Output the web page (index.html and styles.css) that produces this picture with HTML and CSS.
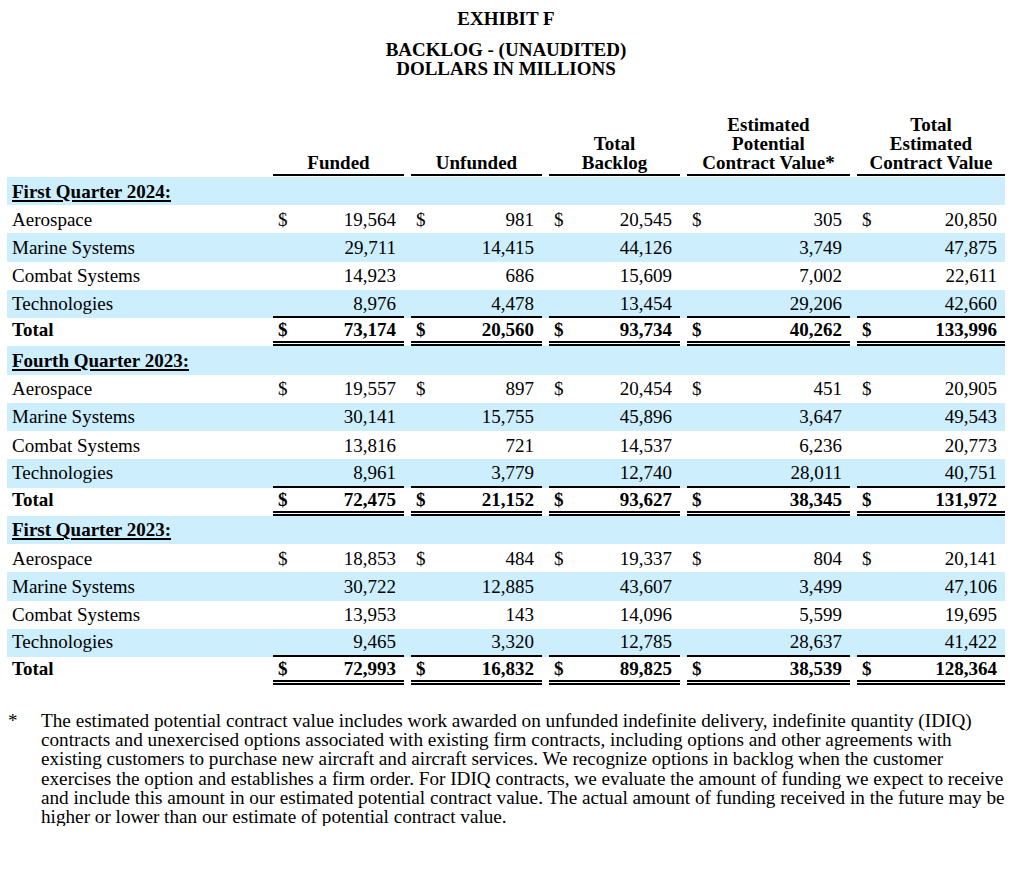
FILE: index.html
```html
<!DOCTYPE html>
<html lang="en">
<head>
<meta charset="utf-8">
<title>Exhibit F - Backlog</title>
<link rel="stylesheet" href="styles.css">
</head>
<body>
<div class="page">
  <div class="title">
    <div class="t1">EXHIBIT F</div>
    <div class="t2">BACKLOG - (UNAUDITED)<br>DOLLARS IN MILLIONS</div>
  </div>

  <div class="table">
    <div class="row head">
      <div class="lab"></div>
      <div class="hc">Funded</div>
      <div class="hc">Unfunded</div>
      <div class="hc">Total<br>Backlog</div>
      <div class="hc">Estimated<br>Potential<br>Contract Value*</div>
      <div class="hc">Total<br>Estimated<br>Contract Value</div>
    </div>

    <div class="row shade sec"><div class="lab"><u>First Quarter 2024:</u></div></div>
    <div class="row"><div class="lab">Aerospace</div><div class="c"><span>$</span><span class="n">19,564</span></div><div class="c"><span>$</span><span class="n">981</span></div><div class="c"><span>$</span><span class="n">20,545</span></div><div class="c"><span>$</span><span class="n">305</span></div><div class="c"><span>$</span><span class="n">20,850</span></div></div>
    <div class="row shade"><div class="lab">Marine Systems</div><div class="c"><span class="n">29,711</span></div><div class="c"><span class="n">14,415</span></div><div class="c"><span class="n">44,126</span></div><div class="c"><span class="n">3,749</span></div><div class="c"><span class="n">47,875</span></div></div>
    <div class="row"><div class="lab">Combat Systems</div><div class="c"><span class="n">14,923</span></div><div class="c"><span class="n">686</span></div><div class="c"><span class="n">15,609</span></div><div class="c"><span class="n">7,002</span></div><div class="c"><span class="n">22,611</span></div></div>
    <div class="row shade sub"><div class="lab">Technologies</div><div class="c"><span class="n">8,976</span></div><div class="c"><span class="n">4,478</span></div><div class="c"><span class="n">13,454</span></div><div class="c"><span class="n">29,206</span></div><div class="c"><span class="n">42,660</span></div></div>
    <div class="row total"><div class="lab">Total</div><div class="c"><span>$</span><span class="n">73,174</span></div><div class="c"><span>$</span><span class="n">20,560</span></div><div class="c"><span>$</span><span class="n">93,734</span></div><div class="c"><span>$</span><span class="n">40,262</span></div><div class="c"><span>$</span><span class="n">133,996</span></div></div>

    <div class="row shade sec"><div class="lab"><u>Fourth Quarter 2023:</u></div></div>
    <div class="row"><div class="lab">Aerospace</div><div class="c"><span>$</span><span class="n">19,557</span></div><div class="c"><span>$</span><span class="n">897</span></div><div class="c"><span>$</span><span class="n">20,454</span></div><div class="c"><span>$</span><span class="n">451</span></div><div class="c"><span>$</span><span class="n">20,905</span></div></div>
    <div class="row shade"><div class="lab">Marine Systems</div><div class="c"><span class="n">30,141</span></div><div class="c"><span class="n">15,755</span></div><div class="c"><span class="n">45,896</span></div><div class="c"><span class="n">3,647</span></div><div class="c"><span class="n">49,543</span></div></div>
    <div class="row"><div class="lab">Combat Systems</div><div class="c"><span class="n">13,816</span></div><div class="c"><span class="n">721</span></div><div class="c"><span class="n">14,537</span></div><div class="c"><span class="n">6,236</span></div><div class="c"><span class="n">20,773</span></div></div>
    <div class="row shade sub"><div class="lab">Technologies</div><div class="c"><span class="n">8,961</span></div><div class="c"><span class="n">3,779</span></div><div class="c"><span class="n">12,740</span></div><div class="c"><span class="n">28,011</span></div><div class="c"><span class="n">40,751</span></div></div>
    <div class="row total"><div class="lab">Total</div><div class="c"><span>$</span><span class="n">72,475</span></div><div class="c"><span>$</span><span class="n">21,152</span></div><div class="c"><span>$</span><span class="n">93,627</span></div><div class="c"><span>$</span><span class="n">38,345</span></div><div class="c"><span>$</span><span class="n">131,972</span></div></div>

    <div class="row shade sec"><div class="lab"><u>First Quarter 2023:</u></div></div>
    <div class="row"><div class="lab">Aerospace</div><div class="c"><span>$</span><span class="n">18,853</span></div><div class="c"><span>$</span><span class="n">484</span></div><div class="c"><span>$</span><span class="n">19,337</span></div><div class="c"><span>$</span><span class="n">804</span></div><div class="c"><span>$</span><span class="n">20,141</span></div></div>
    <div class="row shade"><div class="lab">Marine Systems</div><div class="c"><span class="n">30,722</span></div><div class="c"><span class="n">12,885</span></div><div class="c"><span class="n">43,607</span></div><div class="c"><span class="n">3,499</span></div><div class="c"><span class="n">47,106</span></div></div>
    <div class="row"><div class="lab">Combat Systems</div><div class="c"><span class="n">13,953</span></div><div class="c"><span class="n">143</span></div><div class="c"><span class="n">14,096</span></div><div class="c"><span class="n">5,599</span></div><div class="c"><span class="n">19,695</span></div></div>
    <div class="row shade sub"><div class="lab">Technologies</div><div class="c"><span class="n">9,465</span></div><div class="c"><span class="n">3,320</span></div><div class="c"><span class="n">12,785</span></div><div class="c"><span class="n">28,637</span></div><div class="c"><span class="n">41,422</span></div></div>
    <div class="row total"><div class="lab">Total</div><div class="c"><span>$</span><span class="n">72,993</span></div><div class="c"><span>$</span><span class="n">16,832</span></div><div class="c"><span>$</span><span class="n">89,825</span></div><div class="c"><span>$</span><span class="n">38,539</span></div><div class="c"><span>$</span><span class="n">128,364</span></div></div>
  </div>

  <div class="note">
    <div class="star">*</div>
    <p class="ntext">The estimated potential contract value includes work awarded on unfunded indefinite delivery, indefinite quantity (IDIQ)<br>contracts and unexercised options associated with existing firm contracts, including options and other agreements with<br>existing customers to purchase new aircraft and aircraft services. We recognize options in backlog when the customer<br>exercises the option and establishes a firm order. For IDIQ contracts, we evaluate the amount of funding we expect to receive<br>and include this amount in our estimated potential contract value. The actual amount of funding received in the future may be<br>higher or lower than our estimate of potential contract value.</p>
  </div>
</div>
</body>
</html>
```

FILE: styles.css
```css
* { box-sizing: border-box; }

html, body {
  margin: 0;
  padding: 0;
  background: #ffffff;
}

body {
  font-family: "Liberation Serif", "Times New Roman", serif;
  font-size: 19px;
  line-height: 19px;
  color: #000000;
}

.page {
  width: 998px;
  margin-left: 7px;
}

.title {
  text-align: center;
  font-weight: bold;
  padding-top: 9px;
}

.t2 {
  margin-top: 12px;
}

.table {
  margin-top: 35px;
}

.row {
  display: grid;
  grid-template-columns: 259px 131px 131px 131px 163px 148px;
  column-gap: 7px;
  height: 28.24px;
  align-items: center;
}

.row.shade {
  background: #cdeefc;
}

.row.head {
  height: 64px;
  align-items: end;
}

.hc {
  font-weight: bold;
  text-align: center;
  line-height: 19px;
  padding-bottom: 2px;
  border-bottom: 2px solid #000;
  margin-bottom: 1px;
}

.lab {
  padding-left: 5px;
  white-space: nowrap;
}

.sec .lab {
  font-weight: bold;
}

.sec u {
  text-decoration-thickness: 1.5px;
  text-underline-offset: 2px;
}

.c {
  display: flex;
  align-items: center;
  align-self: stretch;
  padding: 0 8px 0 5px;
}

.c .n {
  margin-left: auto;
}

.row.sub .c {
  border-bottom: 2px solid #000;
}

.row.sub .lab {
  padding-bottom: 2px;
}

.row.total {
  font-weight: bold;
}

.row.total .c {
  border-bottom: 5px double #000;
}

.row.total .lab {
  padding-bottom: 5px;
}

.note {
  display: flex;
  margin-top: 26px;
  width: 1017px;
}

.star {
  width: 34px;
  flex: none;
  padding-left: 1px;
}

.ntext {
  margin: 0;
  white-space: nowrap;
  font-size: 19.2px;
  line-height: 19.1px;
}
```
